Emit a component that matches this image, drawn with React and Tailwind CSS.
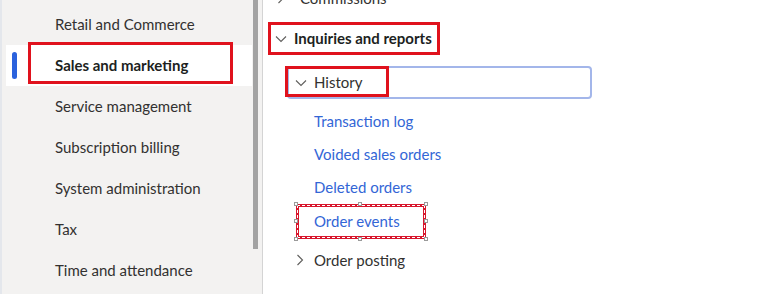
import React from "react";

const font = { fontFamily: 'Lato, "Liberation Sans", sans-serif' };

const ChevronDown = ({ className = "" }) => (
  <svg width="12" height="8" viewBox="0 0 12 8" className={className}>
    <path d="M1 1.5 L6 6.5 L11 1.5" fill="none" stroke="#5f5e5c" strokeWidth="1.1" />
  </svg>
);

const ChevronRight = ({ className = "" }) => (
  <svg width="8" height="12" viewBox="0 0 8 12" className={className}>
    <path d="M1.5 1 L6.5 6 L1.5 11" fill="none" stroke="#5f5e5c" strokeWidth="1.1" />
  </svg>
);

const modules = [
  "Retail and Commerce",
  "Sales and marketing",
  "Service management",
  "Subscription billing",
  "System administration",
  "Tax",
  "Time and attendance",
];

const links = ["Transaction log", "Voided sales orders", "Deleted orders"];

const Handle = ({ className }) => (
  <span className={`absolute w-[4px] h-[4px] bg-white border border-[#9a9a9a] ${className}`} />
);

export default function App() {
  return (
    <div
      className="flex w-[780px] h-[294px] overflow-hidden bg-white text-[15px] text-[#323130] whitespace-nowrap"
      style={font}
    >
      {/* left navigation */}
      <div className="flex w-[263px] shrink-0 bg-[#f3f2f1] border-l-[2px] border-[#e4e7ec] border-r border-r-[#d4d4d4]">
        <div className="flex-1 pt-[4px] pl-[4px]">
          {modules.map((m, i) => {
            const active = i === 1;
            return (
              <div
                key={m}
                className={`relative flex items-center h-[41px] ${active ? "bg-white" : ""}`}
              >
                {active && (
                  <span className="w-[5px] h-[27px] ml-[6px] rounded-full bg-[#2b62dd]" />
                )}
                <span
                  className={`${active ? "ml-[38px] font-bold text-[#201f1e]" : "ml-[49px]"} leading-none`}
                >
                  {m}
                </span>
                {active && (
                  <span className="absolute left-[22px] top-[-3px] w-[205px] h-[42px] border-[3px] border-[#e0121d]" />
                )}
              </div>
            );
          })}
        </div>
        <div className="w-[10px] flex justify-start pl-[1px]">
          <div className="w-[5px] h-[249px] bg-[#a3a3a3]" />
        </div>
      </div>

      {/* right tree */}
      <div className="flex-1 flex flex-col mt-[-20px] pl-[8px]">
        <div className="flex items-center h-[36px]">
          <ChevronRight className="ml-[6px]" />
          <span className="ml-[15px]">Commissions</span>
        </div>
        <div className="relative flex items-center h-[33px] mt-[6px] ml-[-3px] w-[172px]">
          <ChevronDown className="ml-[7px]" />
          <span className="ml-[7px] font-bold text-[#201f1e]">Inquiries and reports</span>
          <span className="absolute inset-0 border-[3px] border-[#e0121d]" />
        </div>
        <div className="relative flex items-center h-[33px] mt-[11px] ml-[16px] w-[305px] rounded-[4px] border-2 border-[#a3b6ea]">
          <ChevronDown className="ml-[6px]" />
          <span className="ml-[7px]">History</span>
          <span className="absolute left-[-4px] top-[-2px] w-[104px] h-[31px] border-[3px] border-[#e0121d]" />
        </div>
        <div className="flex flex-col mt-[6px] pl-[43px]">
          {links.map((l) => (
            <div key={l} className="flex items-center h-[33px] text-[#3366d6]">
              {l}
            </div>
          ))}
          <div className="relative flex items-center h-[35px] w-[130px] ml-[-18px] pl-[18px] text-[#3366d6]">
            Order events
            <span className="absolute inset-0 border-[3px] border-[#d8162c]" />
            <span className="absolute inset-[1px] border border-dashed border-white" />
            <Handle className="left-[-2px] top-[-2px]" />
            <Handle className="right-[-2px] top-[-2px]" />
            <Handle className="left-[-2px] bottom-[-2px]" />
            <Handle className="right-[-2px] bottom-[-2px]" />
            <Handle className="left-[62px] top-[-2px]" />
            <Handle className="left-[62px] bottom-[-2px]" />
            <Handle className="left-[-2px] top-[15px]" />
            <Handle className="right-[-2px] top-[15px]" />
          </div>
        </div>
        <div className="flex items-center h-[40px] mt-[1px] ml-[25px]">
          <ChevronRight />
          <span className="ml-[10px]">Order posting</span>
        </div>
      </div>
    </div>
  );
}
